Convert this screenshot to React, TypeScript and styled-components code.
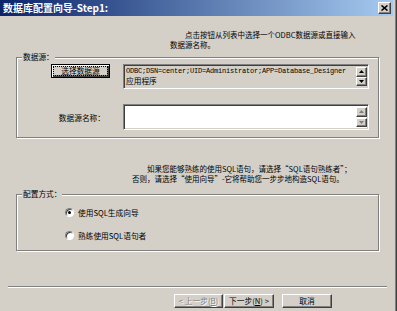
import styled, { createGlobalStyle } from 'styled-components';

const face = '#D4D0C8';
const cjk = '"Noto Sans CJK SC", "Noto Sans", sans-serif';

const GlobalStyle = createGlobalStyle`
  html, body {
    margin: 0;
    padding: 0;
    background: ${face};
  }
  * {
    box-sizing: border-box;
  }
`;

const Window = styled.div`
  width: 397px;
  height: 311px;
  overflow: hidden;
  display: flex;
  flex-direction: column;
  background: ${face};
  border-right: 1px solid #404040;
  box-shadow: inset -1px 0 0 #808080;
  padding-right: 3px;
  font-family: ${cjk};
  font-size: 7.7px;
  color: #000;
`;

const TitleBar = styled.div`
  height: 17px;
  flex: none;
  display: flex;
  align-items: center;
  justify-content: space-between;
  padding: 0 2px 1px 3px;
  background: linear-gradient(to right, #0a246a, #a6caf0);
  box-shadow: inset 0 -1px 0 ${face};
`;

const Title = styled.span`
  color: #fff;
  font-weight: bold;
  font-size: 10px;
  line-height: 12px;
  white-space: nowrap;
`;

const CloseButton = styled.div`
  width: 13px;
  height: 12px;
  display: flex;
  align-items: center;
  justify-content: center;
  background: ${face};
  border: 1px solid;
  border-color: #fff #404040 #404040 #fff;
  box-shadow: inset -1px -1px 0 #808080;
`;

const Note = styled.div<{ $left: number; $top: number }>`
  margin-left: ${({ $left }) => $left}px;
  margin-top: ${({ $top }) => $top}px;
  white-space: nowrap;
`;

const NoteLine = styled.span<{ $indent?: number }>`
  display: block;
  height: 10px;
  line-height: 10px;
  font-size: 7.5px;
  padding-left: ${({ $indent = 0 }) => $indent}px;
`;

const Group = styled.div<{ $top: number }>`
  position: relative;
  margin-left: 16px;
  margin-top: ${({ $top }) => $top}px;
  width: 363px;
  border: 1px solid #808080;
  box-shadow: 1px 1px 0 #fff, inset 1px 1px 0 #fff;
`;

const GroupLabel = styled.span`
  position: absolute;
  top: -6px;
  left: 5px;
  padding: 0 1px;
  background: ${face};
  line-height: 10px;
`;

const SourceGrid = styled.div`
  display: grid;
  grid-template-columns: 59px 246px;
  column-gap: 13px;
  row-gap: 15px;
  padding: 6px 0 7px 34px;
  align-items: center;
`;

const FieldLabel = styled.span`
  justify-self: end;
  margin-right: 5px;
`;

const PushButton = styled.div<{ $width: number; $default?: boolean; $disabled?: boolean }>`
  width: ${({ $width }) => $width}px;
  height: 14px;
  display: flex;
  align-items: center;
  justify-content: center;
  background: ${face};
  border: 1px solid;
  border-color: ${({ $default }) =>
    $default ? '#000' : '#fff #404040 #404040 #fff'};
  box-shadow: ${({ $default }) =>
    $default
      ? 'inset 1px 1px 0 #fff, inset -1px -1px 0 #404040, inset -2px -2px 0 #808080'
      : 'inset -1px -1px 0 #808080'};
  color: ${({ $disabled }) => ($disabled ? '#808080' : '#000')};
  text-shadow: ${({ $disabled }) => ($disabled ? '1px 1px 0 #fff' : 'none')};
  white-space: nowrap;
  line-height: 10px;
  align-self: start;
`;

const FocusRing = styled.span`
  border: 1px dotted #000;
  padding: 0 7px;
  line-height: 8px;
`;

const Edit = styled.div<{ $height: number; $readOnly?: boolean }>`
  height: ${({ $height }) => $height}px;
  display: flex;
  background: ${({ $readOnly }) => ($readOnly ? face : '#fff')};
  border: 1px solid;
  border-color: #808080 #fff #fff #808080;
  box-shadow: inset 1px 1px 0 #404040, inset -1px -1px 0 ${face};
  padding: 1px;
`;

const EditText = styled.div`
  flex: 1;
  padding: 1px 0 0 1px;
  overflow: hidden;
  line-height: 9px;
`;

const MonoLine = styled.div`
  font-family: "Liberation Mono", monospace;
  font-size: 7px;
  letter-spacing: -0.2px;
  white-space: nowrap;
`;

const ScrollBar = styled.div`
  width: 11px;
  display: flex;
  flex-direction: column;
  justify-content: space-between;
  padding: 1px 0;
`;

const ArrowButton = styled.div`
  height: 9.5px;
  display: flex;
  align-items: center;
  justify-content: center;
  background: ${face};
  border: 1px solid;
  border-color: #fff #404040 #404040 #fff;
  box-shadow: inset -1px -1px 0 #808080;
`;

const RadioList = styled.div`
  display: flex;
  flex-direction: column;
  gap: 12px;
  padding: 12px 0 9px 48px;
`;

const RadioRow = styled.label`
  height: 11px;
  display: flex;
  align-items: center;
  gap: 4px;
`;

const RadioDot = styled.span<{ $checked?: boolean }>`
  position: relative;
  width: 9px;
  height: 9px;
  border-radius: 50%;
  background: #fff;
  border: 1px solid;
  border-color: #808080 #fff #fff #808080;
  box-shadow: inset 1px 1px 0 #404040;

  &::after {
    content: '';
    display: ${({ $checked }) => ($checked ? 'block' : 'none')};
    position: absolute;
    left: 2px;
    top: 2px;
    width: 3px;
    height: 3px;
    border-radius: 50%;
    background: #000;
  }
`;

const Separator = styled.div`
  margin: 35px 6px 0 8px;
  height: 2px;
  border-top: 1px solid #808080;
  border-bottom: 1px solid #fff;
`;

const ButtonRow = styled.div`
  display: flex;
  gap: 1px;
  margin-top: 6px;
  margin-left: 174px;
`;

const Spacer = styled.div`
  width: 6px;
`;

const Key = styled.u`
  text-decoration-thickness: 1px;
`;

function Arrow({ up, disabled }: { up?: boolean; disabled?: boolean }) {
  return (
    <svg width="5" height="3" viewBox="0 0 5 3">
      <path
        d={up ? 'M2.5 0 L5 3 L0 3 Z' : 'M0 0 L5 0 L2.5 3 Z'}
        fill={disabled ? '#808080' : '#000'}
      />
    </svg>
  );
}

function Scroll({ disabled }: { disabled?: boolean }) {
  return (
    <ScrollBar>
      <ArrowButton>
        <Arrow up disabled={disabled} />
      </ArrowButton>
      <ArrowButton>
        <Arrow disabled={disabled} />
      </ArrowButton>
    </ScrollBar>
  );
}

export default function App() {
  return (
    <>
      <GlobalStyle />
      <Window>
        <TitleBar>
          <Title>数据库配置向导-Step1:</Title>
          <CloseButton>
            <svg width="7" height="6" viewBox="0 0 7 6">
              <path d="M0.5 0.5 L6.5 5.5 M6.5 0.5 L0.5 5.5" stroke="#000" strokeWidth="1.6" />
            </svg>
          </CloseButton>
        </TitleBar>

        <Note $left={170} $top={13}>
          <NoteLine $indent={15}>点击按钮从列表中选择一个ODBC数据源或直接输入</NoteLine>
          <NoteLine>数据源名称。</NoteLine>
        </Note>

        <Group $top={7}>
          <GroupLabel>数据源：</GroupLabel>
          <SourceGrid>
            <PushButton $width={59} $default>
              <FocusRing>选择数据源</FocusRing>
            </PushButton>
            <Edit $height={25} $readOnly>
              <EditText>
                <MonoLine>ODBC;DSN=center;UID=Administrator;APP=Database_Designer</MonoLine>
                <div>应用程序</div>
              </EditText>
              <Scroll />
            </Edit>
            <FieldLabel>数据源名称：</FieldLabel>
            <Edit $height={26}>
              <EditText />
              <Scroll disabled />
            </Edit>
          </SourceGrid>
        </Group>

        <Note $left={132} $top={26}>
          <NoteLine $indent={15}>如果您能够熟练的使用SQL语句，请选择“SQL语句熟练者”；</NoteLine>
          <NoteLine>否则，请选择“使用向导”-它将帮助您一步步地构造SQL语句。</NoteLine>
        </Note>

        <Group $top={10}>
          <GroupLabel>配置方式：</GroupLabel>
          <RadioList>
            <RadioRow>
              <RadioDot $checked />
              使用SQL生成向导
            </RadioRow>
            <RadioRow>
              <RadioDot />
              熟练使用SQL语句者
            </RadioRow>
          </RadioList>
        </Group>

        <Separator />

        <ButtonRow>
          <PushButton $width={49} $disabled>
            &lt; 上一步(<Key>B</Key>)
          </PushButton>
          <PushButton $width={50}>
            下一步(<Key>N</Key>) &gt;
          </PushButton>
          <Spacer />
          <PushButton $width={50}>取消</PushButton>
        </ButtonRow>
      </Window>
    </>
  );
}
